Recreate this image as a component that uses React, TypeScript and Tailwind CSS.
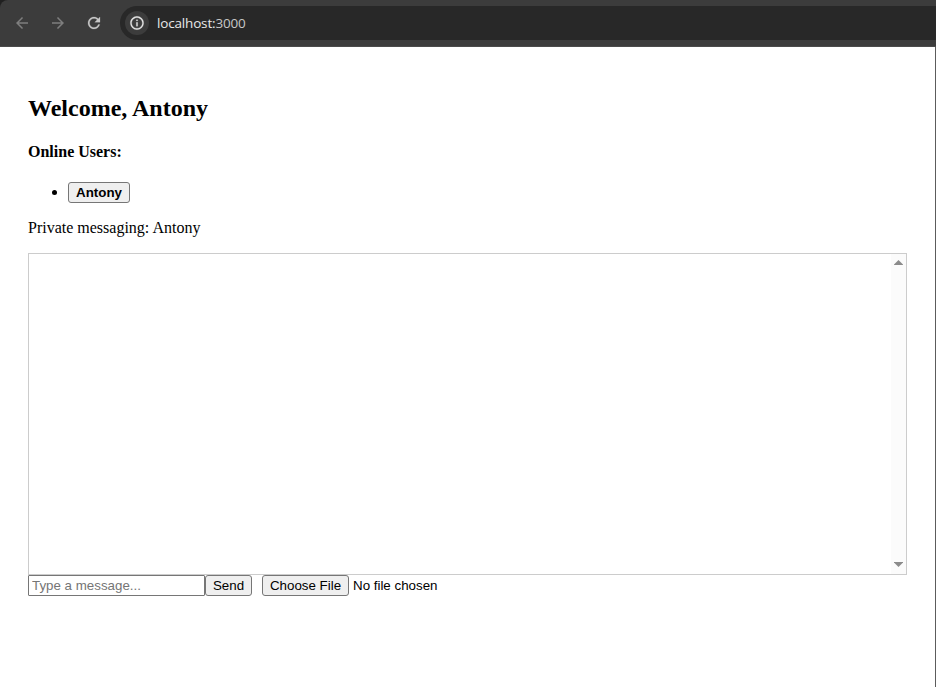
import React from "react";

const button =
  "box-border flex h-[21px] items-center justify-center rounded-[3px] border border-[#767676] bg-[#efefef] font-['Liberation_Sans',Arial,sans-serif] text-[13.333px] leading-[15px] text-black";

function MaterialIcon({
  path,
  size,
  color,
  weight = 0,
}: {
  path: string;
  size: number;
  color: string;
  weight?: number;
}) {
  return (
    <svg
      width={size}
      height={size}
      viewBox="0 0 24 24"
      fill={color}
      stroke={color}
      strokeWidth={weight}
      className="block shrink-0"
    >
      <path d={path} />
    </svg>
  );
}

function BrowserBar() {
  return (
    <div className="bg-[#202020]">
      <header className="flex h-[47px] items-start rounded-tl-[8px] border-b border-[#4b4b4b] bg-[#3c3c3c] pt-[6px]">
        <div className="flex h-[34px] w-[120px] shrink-0 items-center gap-[18px] pl-[13px]">
          <MaterialIcon size={18} color="#7e7e7e" path="M20 11H7.83l5.59-5.59L12 4l-8 8 8 8 1.41-1.41L7.83 13H20v-2z" />
          <MaterialIcon size={18} color="#7e7e7e" path="M4 11h12.17l-5.59-5.59L12 4l8 8-8 8-1.41-1.41L16.17 13H4v-2z" />
          <MaterialIcon
            size={18}
            color="#c7c7c7"
            weight={0.3}
            path="M17.65 6.35C16.2 4.9 14.21 4 12 4c-4.42 0-7.99 3.58-7.99 8s3.57 8 7.99 8c3.73 0 6.84-2.55 7.73-6h-2.08c-.82 2.33-3.04 4-5.65 4-3.31 0-6-2.69-6-6s2.69-6 6-6c1.66 0 3.14.69 4.22 1.78L13 11h7V4l-2.35 2.35z"
          />
        </div>
        <div className="flex h-[34px] flex-1 items-center rounded-l-full bg-[#282828] pl-[5px]">
          <span className="flex size-[24px] items-center justify-center rounded-full bg-[#3c3c3c]">
            <MaterialIcon
              size={16}
              color="#e3e3e3"
              weight={0.3}
              path="M11 7h2v2h-2zm0 4h2v6h-2zm1-9C6.48 2 2 6.48 2 12s4.48 10 10 10 10-4.48 10-10S17.52 2 12 2zm0 18c-4.41 0-8-3.59-8-8s3.59-8 8-8 8 3.59 8 8-3.59 8-8 8z"
            />
          </span>
          <span className="ml-[8px] font-['Open_Sans',sans-serif] text-[13.5px] leading-[18px] tracking-[-0.17px] text-[#e8e8e8]">
            localhost:<span className="text-[#c7c7c7]">3000</span>
          </span>
        </div>
      </header>
    </div>
  );
}

function MessageArea() {
  return (
    <div className="flex h-[322px] w-[879px] justify-end border border-[#cccccc]">
      <div className="flex w-[15px] flex-col items-center justify-between bg-[#fbfbfb] pt-[6px] pb-[7px]">
        <svg width="9" height="5" viewBox="0 0 9 5" fill="#8b8b8b" className="block">
          <path d="M4.5 0L9 4.5V5H0v-.5z" />
        </svg>
        <svg width="9" height="5" viewBox="0 0 9 5" fill="#8b8b8b" className="block">
          <path d="M0 0h9v.5L4.5 5 0 .5z" />
        </svg>
      </div>
    </div>
  );
}

export default function App() {
  return (
    <div className="flex h-[687px] w-[936px] flex-col overflow-hidden bg-white font-['Liberation_Serif','Times_New_Roman',serif] text-[16px] leading-[18px] text-black">
      <BrowserBar />
      <main className="flex-1 border-r border-[#5c5c5c] pt-[48px] pl-[28px]">
        <h2 className="text-[24px] leading-[27px] font-bold">Welcome, Antony</h2>
        <h4 className="mt-[21px] font-bold">Online Users:</h4>
        <ul className="mt-[21px] flex h-[21px] items-center pl-[24px]">
          <li className="flex items-center">
            <span className="mr-[11px] size-[5px] rounded-full bg-black" />
            <button className={`${button} w-[62px] font-bold`}>Antony</button>
          </li>
        </ul>
        <p className="my-[16px]">Private messaging: Antony</p>
        <MessageArea />
        <div className="flex h-[21px] items-center">
          <input
            type="text"
            placeholder="Type a message..."
            className="h-[21px] w-[177px] rounded-[1px] border border-[#767676] bg-white px-[3px] font-['Liberation_Sans',Arial,sans-serif] text-[13.333px] leading-[15px] placeholder:text-[#757575]"
          />
          <button className={`${button} w-[47px]`}>Send</button>
          <button className={`${button} ml-[10px] w-[87px]`}>Choose File</button>
          <span className="ml-[4px] font-['Liberation_Sans',Arial,sans-serif] text-[13.333px] leading-[15px]">No file chosen</span>
        </div>
      </main>
    </div>
  );
}
